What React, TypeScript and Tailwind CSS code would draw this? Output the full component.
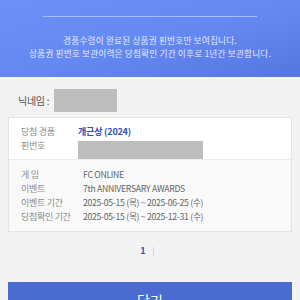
import React from "react";

const font = { fontFamily: '"Noto Sans CJK KR", "Noto Sans", sans-serif' };

function Row({ label, value }: { label: string; value: string }) {
  return (
    <div className="flex h-[14px] items-center leading-[14px]">
      <div className="w-[62px] shrink-0 text-[9px] tracking-[-0.3px] text-[#8c8c8c]">{label}</div>
      <div className="text-[8.7px] tracking-[-0.3px] text-[#666]">{value}</div>
    </div>
  );
}

export default function App() {
  return (
    <div style={font} className="flex h-[300px] w-[300px] flex-col overflow-hidden bg-[#f3f3f3]">
      <div className="h-[77px] shrink-0 bg-gradient-to-br from-[#6b90f7] via-[#6589f2] to-[#5576e0] pt-[16px]">
        <div className="mx-[43px] h-px bg-[#a7bdf7]" />
        <div className="mt-[17px] flex flex-col items-center text-[8.7px] leading-[13px] tracking-[0.15px] text-[#e4ebff]">
          <div>경품수령이 완료된 상품권 핀번호만 보여집니다.</div>
          <div>상품권 핀번호 보관이력은 당첨확인 기간 이후로 1년간 보관합니다.</div>
        </div>
      </div>

      <div className="mt-[12px] flex h-[23px] items-center px-[18px]">
        <span className="text-[10px] tracking-[-0.3px] text-[#555]">닉네임 :</span>
        <div className="ml-[5px] h-[23px] w-[63px] bg-[#bdbdbd]" />
      </div>

      <div className="mx-[8px] mt-[5px] border border-[#e4e4e4] bg-white">
        <div className="px-[12px] pt-[7px]">
          <div className="flex h-[14px] items-center leading-[14px]">
            <div className="w-[57px] shrink-0 text-[9px] tracking-[-0.3px] text-[#8c8c8c]">당첨 경품</div>
            <div className="text-[9px] font-bold tracking-[-0.2px] text-[#2f4fb8]">개근상 (2024)</div>
          </div>
          <div className="flex items-start">
            <div className="h-[14px] w-[57px] shrink-0 text-[9px] leading-[14px] tracking-[-0.3px] text-[#8c8c8c]">핀번호</div>
            <div className="mt-[2px] h-[18px] w-[125px] bg-[#bdbdbd]" />
          </div>
        </div>
        <div className="border-t border-[#ececec] bg-[#f9f9f9] px-[12px] pb-[7px] pt-[8px]">
          <Row label="게 임" value="FC ONLINE" />
          <Row label="이벤트" value="7th ANNIVERSARY AWARDS" />
          <Row label="이벤트 기간" value="2025-05-15 (목) ~ 2025-06-25 (수)" />
          <Row label="당첨확인 기간" value="2025-05-15 (목) ~ 2025-12-31 (수)" />
        </div>
      </div>

      <div className="mt-[13px] flex h-[12px] items-center justify-center">
        <span className="ml-[-6px] text-[9px] font-bold leading-[12px] text-[#3050c0]">1</span>
        <span className="ml-[7px] h-[9px] w-px bg-[#d6d6d6]" />
      </div>

      <div className="mx-[8px] mt-[25px] flex h-[40px] shrink-0 items-start justify-center bg-[#4a6bd0] pt-[8px]">
        <span className="text-[14px] text-white">닫기</span>
      </div>
    </div>
  );
}
